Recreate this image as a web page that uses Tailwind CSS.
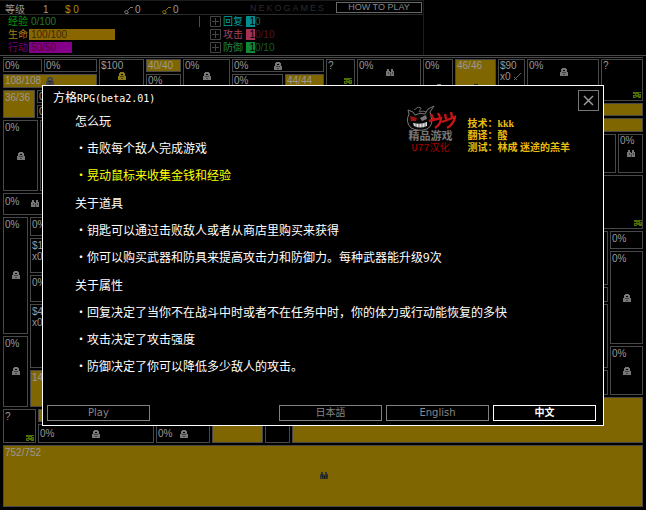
<!DOCTYPE html>
<html lang="zh-CN">
<head>
<meta charset="utf-8">
<meta name="viewport" content="width=device-width, initial-scale=1">
<title>方格RPG</title>
<script src="https://cdn.jsdelivr.net/npm/@tailwindcss/browser@4"></script>
</head>
<body class="relative bg-black pb-[3px] text-[10px] leading-3 text-[#999] font-['Liberation_Sans','Noto_Sans_CJK_SC',sans-serif]">

<svg class="hidden" aria-hidden="true">
  <symbol id="lock" viewBox="0 0 8 8"><g shape-rendering="crispEdges"><path d="M2 0h4v1h1v3h1v4H0V4h1V1h1zM3 2v1h2V2z" fill="currentColor" fill-rule="evenodd"/><path d="M2 4h4v1H2zM3 6h2v1H3z" fill="#000" fill-opacity=".45"/></g></symbol>
  <symbol id="pair" viewBox="0 0 8 8"><g shape-rendering="crispEdges"><path d="M1 1h2v2h1v1h1V1h2v2h1v5H0V3h1z" fill="currentColor"/><path d="M2 4h1v2H2zM4 5h1v3H4zM6 4h1v2H6z" fill="#000" fill-opacity=".45"/></g></symbol>
  <symbol id="stairs" viewBox="0 0 8 6"><g shape-rendering="crispEdges"><path d="M0 0h8v1H6v1h2v4H5V5H3v1H0V3h2V2H0z" fill="currentColor"/><path d="M3 2h2v1H3zM1 4h2v1H1zM6 3h1v1H6z" fill="#000" fill-opacity=".55"/></g></symbol>
  <symbol id="plus" viewBox="0 0 11 11"><path d="M.5.5h10v10H.5zM2 5.500h7M5.500 2v7" stroke="currentColor" fill="none"/></symbol>
  <symbol id="key" viewBox="0 0 10 8"><path d="M.5 5.500l1.500-1 2 1v2H1.500zM3.500 4.500L7 1M6 1.500h3" stroke="currentColor" fill="none"/></symbol>
</svg>

<header class="h-[55px] w-[424px] border-t border-r border-[#1c1c1c]">
  <div class="flex h-[14px] items-center border-b border-[#2a2a2a]">
    <div class="flex flex-1 items-center pt-1 pl-[5px]">
      <span class="w-[38px]">等级</span>
      <span class="w-[22px]">1</span>
      <span class="w-[59px] text-[#a59300]">$ 0</span>
      <span class="flex w-[38px] items-center gap-[1px]"><svg class="h-2 w-[10px] text-[#777]"><use href="#key"/></svg>0</span>
      <span class="flex items-center gap-[1px]"><svg class="h-2 w-[10px] text-[#857500]"><use href="#key"/></svg>0</span>
    </div>
    <span class="w-[86px] tracking-[2px] text-[#2c2c2c] text-[9px]">NEKOGAMES</span>
    <button class="mr-[1px] h-[11px] w-[86px] border border-[#666] text-[9px] leading-[9px] text-[#888]">HOW TO PLAY</button>
  </div>
  <div class="flex gap-[10px] pt-[1px] pl-2">
    <div class="grid w-[192px] grid-cols-[21px_1fr] gap-y-[2px] leading-[11px]">
      <span class="text-[#00940c]">经验</span>
      <div class="border-r border-[#008010] pl-[2px] text-[#28752c]">0/100</div>
      <span class="text-[#a47c18]">生命</span>
      <div><div class="w-[86px] bg-[#8a6600] pl-[2px] text-[#3b2b08]">100/100</div></div>
      <span class="text-[#790079]">行动</span>
      <div><div class="w-[43px] bg-[#85008a] pl-[2px] text-[#510028]">50/50</div></div>
    </div>
    <div class="grid grid-cols-[13px_23px_9px_1fr] content-start gap-y-[2px] leading-[11px]">
      <svg class="size-[11px] text-[#444]"><use href="#plus"/></svg><span class="text-[#00a0a0]">回复</span><span class="w-[9px] bg-[#008d8d] text-right text-black">1</span><span class="text-[#176565]">0</span>
      <svg class="size-[11px] text-[#444]"><use href="#plus"/></svg><span class="text-[#a84460]">攻击</span><span class="w-[9px] bg-[#a33355] text-right text-black">1</span><span class="text-[#551522]">0/10</span>
      <svg class="size-[11px] text-[#444]"><use href="#plus"/></svg><span class="text-[#238746]">防御</span><span class="w-[9px] bg-[#108835] text-right text-black">1</span><span class="text-[#1c5c24]">0/10</span>
    </div>
  </div>
</header>

<main class="border-t border-[#4a4a4a] px-[3px]">
  <div class="my-[1px] border-t border-[#4a4a4a]"></div>
  <div class="grid grid-cols-[287fr_307fr_42fr] gap-[2px]">

    <div class="col-span-2 grid h-[29px] grid-cols-[94fr_45fr_35fr_47fr_92fr_29fr_64fr_30fr_41fr_27fr_72fr] gap-[2px] *:min-w-0">
      <div class="flex flex-col gap-[2px]">
        <div class="grid grid-cols-[39fr_53fr] gap-[2px]">
          <div class="h-[13px] border border-[#484848] pl-[1px]">0%</div>
          <div class="h-[13px] border border-[#484848] pl-[1px]">0%</div>
        </div>
        <div class="flex h-[14px] items-center gap-[5px] border border-[#484848] bg-[#806600] pl-[1px]">108/108 <svg class="size-2 text-[#444]"><use href="#lock"/></svg></div>
      </div>
      <div class="border border-b-0 border-[#484848] pl-[1px]">$100<svg class="mx-auto size-2 text-[#8a7a18]"><use href="#lock"/></svg></div>
      <div class="flex flex-col gap-[2px]">
        <div class="h-[13px] border border-[#484848] bg-[#806600] pl-[1px]">40/40</div>
        <div class="h-[14px] border border-b-0 border-[#484848] pl-[1px]">0%</div>
      </div>
      <div class="border border-b-0 border-[#484848] pl-[1px]">0%<svg class="mx-auto size-2 text-[#777]"><use href="#lock"/></svg></div>
      <div class="flex flex-col gap-[2px]">
        <div class="grid h-[13px] grid-cols-3 items-center border border-[#484848] pl-[1px]">0%<svg class="mx-auto size-2 text-[#777]"><use href="#lock"/></svg></div>
        <div class="grid grid-cols-[51fr_39fr] gap-[2px]">
          <div class="h-[14px] border border-b-0 border-[#484848] pl-[1px]">0%</div>
          <div class="h-[14px] border border-b-0 border-[#484848] bg-[#806600] pl-[1px]">44/44</div>
        </div>
      </div>
      <div class="border border-b-0 border-[#484848] pr-[2px] pl-[1px]">?<svg class="mt-[6px] ml-auto h-[6px] w-2 text-[#4b7000]"><use href="#stairs"/></svg></div>
      <div class="border border-b-0 border-[#484848] pl-[1px]">0%<svg class="mx-auto -mt-1 size-2 text-[#777]"><use href="#pair"/></svg></div>
      <div class="overflow-hidden border border-b-0 border-[#484848] pl-[1px]">0%<svg class="mx-auto mt-3 size-2 text-[#777]"><use href="#lock"/></svg></div>
      <div class="overflow-hidden border border-b-0 border-[#484848] bg-[#806600] pl-[1px]">46/46<svg class="mx-auto mt-3 size-2 text-[#222]"><use href="#lock"/></svg></div>
      <div class="border border-b-0 border-[#484848] pl-[1px] leading-[11px]">$90<div class="flex items-center gap-[2px]">x0<svg class="size-[9px]" viewBox="0 0 9 9"><path d="M1 8l7-7M1 5l3 3" stroke="#666" fill="none"/></svg></div></div>
      <div class="border border-b-0 border-[#484848] pl-[1px]">0%<svg class="mx-auto -mt-1 size-2 text-[#777]"><use href="#lock"/></svg></div>
    </div>

    <div class="row-span-2 flex flex-col gap-[2px]">
      <div class="flex h-[42px] flex-col justify-between border border-[#484848] pr-[1px] pb-[2px] pl-[1px]">?<svg class="ml-auto h-[6px] w-2 text-[#4b7000]"><use href="#stairs"/></svg></div>
      <div class="h-[13px] border border-[#484848] bg-[#806600]"></div>
      <div class="h-[14px] border border-[#484848] bg-[#806600]"></div>
      <div class="grid h-[39px] grid-cols-[15fr_25fr] gap-[2px]">
        <div class="border border-[#484848]"></div>
        <div class="border border-[#484848] pl-[1px]">0%<svg class="mx-auto mt-[2px] size-2 text-[#777]"><use href="#pair"/></svg></div>
      </div>
      <div class="flex h-[54px] items-end justify-end border border-[#484848] pb-[2px]"><svg class="h-[6px] w-2 text-[#4b7000]"><use href="#stairs"/></svg></div>
      <div class="grid h-[164px] grid-cols-[7fr_33fr] gap-[2px]">
        <div class="flex flex-col gap-[2px]">
          <div class="h-[54px] border border-[#484848]"></div>
          <div class="h-[15px] border border-[#484848]"></div>
          <div class="h-[64px] border border-[#484848]"></div>
          <div class="h-[25px] border border-[#484848]"></div>
        </div>
        <div class="flex flex-col gap-[2px]">
          <div class="h-[18px] border border-[#484848] pt-[1px] pl-[1px]">0%</div>
          <div class="h-[93px] border border-[#484848] pt-[1px] pl-[1px]">0%<svg class="mx-auto mt-[29px] size-2 text-[#777]"><use href="#lock"/></svg></div>
          <div class="h-[49px] border border-[#484848] pt-[1px] pl-[1px]">0%<svg class="mx-auto mt-[7px] size-2 text-[#777]"><use href="#lock"/></svg></div>
        </div>
      </div>
    </div>

    <div class="row-span-2 flex flex-col gap-[2px]">
      <div class="flex h-[28px] gap-[2px]">
        <div class="w-[32px] border border-[#484848] bg-[#806600] pt-[1px] pl-[1px]">36/36</div>
        <div class="flex flex-1 flex-col gap-[2px]">
          <div class="h-[13px] border border-[#484848] pl-[1px]">0%</div>
          <div class="h-[13px] border border-[#484848] pl-[1px]">0%</div>
        </div>
      </div>
      <div class="flex h-[71px] gap-[2px]">
        <div class="w-[35px] border border-[#484848] pt-[1px] pl-[1px]">0%<svg class="mx-auto mt-[18px] size-2 text-[#777]"><use href="#lock"/></svg></div>
        <div class="flex-1 border border-[#484848]"></div>
      </div>
      <div class="flex h-[22px] border border-[#484848] pt-[2px] pl-[1px]"><span class="w-[26px]">0%</span><svg class="mt-[3px] size-2 text-[#777]"><use href="#pair"/></svg></div>
      <div class="flex h-[190px] gap-[2px]">
        <div class="flex w-[25px] flex-col gap-[2px]">
          <div class="h-[117px] border border-[#484848] pt-[1px] pl-[1px]">0%<svg class="mx-auto mt-[40px] size-2 text-[#777]"><use href="#lock"/></svg></div>
          <div class="h-[71px] border border-[#484848] pt-[1px] pl-[1px]">0%<svg class="mx-auto mt-[17px] size-2 text-[#777]"><use href="#lock"/></svg></div>
        </div>
        <div class="flex flex-1 flex-col gap-[2px]">
          <div class="h-[19px] border border-[#484848] pt-[1px] pl-[1px]">0%</div>
          <div class="h-[35px] border border-[#484848] pt-[1px] pl-[1px] leading-[11px]">$1<br>x0</div>
          <div class="h-[27px] border border-[#484848] pt-[1px] pl-[1px]">0%</div>
          <div class="h-[64px] border border-[#484848] pt-[1px] pl-[1px] leading-[11px]">$4<br>x0</div>
          <div class="h-[37px] border border-[#484848] bg-[#806600] pt-[1px] pl-[1px]">144/144</div>
        </div>
      </div>
      <div class="flex h-[34px] gap-[2px]">
        <div class="flex w-[33px] flex-col justify-between border border-[#484848] p-[1px]">?<svg class="ml-auto h-[6px] w-2 text-[#4b7000]"><use href="#stairs"/></svg></div>
        <div class="flex flex-1 flex-col gap-[2px]">
          <div class="h-[13px] border border-[#484848] bg-[#806600]"></div>
          <div class="grid h-[19px] grid-cols-[115fr_54fr_50fr_25fr] gap-[2px]">
            <div class="grid grid-cols-3 items-center border border-[#484848] pl-[1px]">0%<svg class="mx-auto size-2 text-[#777]"><use href="#lock"/></svg></div>
            <div class="grid grid-cols-3 items-center border border-[#484848] pl-[1px]">0%<svg class="mx-auto size-2 text-[#777]"><use href="#lock"/></svg></div>
            <div class="border border-[#484848] bg-[#806600]"></div>
            <div class="border border-[#484848]"></div>
          </div>
        </div>
      </div>
    </div>

    <div class="h-[305px]"></div>
    <div class="col-span-2 h-[46px] border border-[#484848] bg-[#806600]"></div>
    <div class="col-span-3 h-[62px] border border-[#484848] bg-[#806600] pt-[1px] pl-[1px]">752/752<svg class="mx-auto mt-[12px] size-2 text-[#333]"><use href="#pair"/></svg></div>
  </div>
</main>

<section role="dialog" aria-labelledby="title" class="absolute inset-x-[42px] top-[85px] border border-white bg-black px-1 pb-1 font-['DejaVu_Sans_Mono','Noto_Sans_CJK_SC',sans-serif] text-white">
  <div class="flex h-[21px] items-start pt-1">
    <h1 id="title" class="flex-1 pl-[6px] leading-[14px]"><span class="font-['Noto_Sans_CJK_SC',sans-serif] text-xs leading-[14px]">方格</span>RPG(beta2.01)</h1>
    <button aria-label="关闭" class="size-[21px] shrink-0 border border-[#777]"><svg class="m-auto size-[11px]" viewBox="0 0 11 11"><path d="M1 1l9 9M10 1l-9 9" stroke="#999" stroke-width="1.500"/></svg></button>
  </div>
  <div class="flex flex-col gap-[1px] pl-[28px] font-['Noto_Sans_CJK_SC',sans-serif] text-xs leading-[27px]">
    <div>
      <h2>怎么玩</h2>
      <ul>
        <li>・击败每个敌人完成游戏</li>
        <li class="text-[#ffff00]">・晃动鼠标来收集金钱和经验</li>
      </ul>
    </div>
    <div>
      <h2>关于道具</h2>
      <ul>
        <li>・钥匙可以通过击败敌人或者从商店里购买来获得</li>
        <li>・你可以购买武器和防具来提高攻击力和防御力。每种武器能升级9次</li>
      </ul>
    </div>
    <div>
      <h2>关于属性</h2>
      <ul>
        <li>・回复决定了当你不在战斗中时或者不在任务中时，你的体力或行动能恢复的多快</li>
        <li>・攻击决定了攻击强度</li>
        <li>・防御决定了你可以降低多少敌人的攻击。</li>
      </ul>
    </div>
  </div>
  <div class="mt-[26px] flex gap-1 pr-[3px] font-['DejaVu_Sans','Noto_Sans_CJK_JP',sans-serif] leading-[14px] text-[#888]">
    <button class="mr-auto h-4 w-[103px] border border-[#808080]">Play</button>
    <button class="h-4 w-[103px] border border-[#808080]">日本語</button>
    <button class="h-4 w-[103px] border border-[#808080]">English</button>
    <button class="h-4 w-[103px] border border-white font-bold text-white">中文</button>
  </div>

  <div class="absolute top-[19px] right-[33px] flex gap-3">
    <div class="w-[50px]">
      <svg class="h-[26px] w-[50px]" viewBox="0 0 50 26" aria-hidden="true">
        <path d="M3 9L2 5l5 2 2 3q5-3 10-1l3-5 6-3-4 6 1 4q3 9-4 13-8 3-16-1-6-6-2-14z" fill="#060606" stroke="#777"/>
        <path d="M8 5l4-3 3 1-2 4M14 7q3-2 6 0" stroke="#666" fill="none"/>
        <path d="M4 11l7 2-1 3H5z" fill="#a01010"/><path d="M14 13l6-3 1 4-5 2z" fill="#777"/>
        <path d="M7 18q8 2 14-1v4q-7 3-13 0z" fill="#ddd"/><path d="M10 18v4M13 18v5M16 18v5M19 18v4" stroke="#333" stroke-width=".6"/>
        <path d="M25 9l3 6M23 16l12-3q0 6-6 10M32 8l2 4M39 9l1 5M36 17l13-5q-1 7-8 11M45 7l1 5" stroke="#c41414" stroke-width="2.400" fill="none"/>
      </svg>
      <div class="text-center text-[11px] leading-3 font-bold whitespace-nowrap text-[#777]">精品游戏</div>
      <div class="text-center font-['Liberation_Mono','Noto_Sans_CJK_SC',monospace] text-[#a80000]">U77汉化</div>
    </div>
    <div class="mt-[13px] font-['Liberation_Serif','Noto_Sans_CJK_SC',serif] font-bold whitespace-nowrap text-[#e8bd10]">
      <p>技术：kkk</p>
      <p>翻译：酸</p>
      <p>测试：林成 迷途的羔羊</p>
    </div>
  </div>
</section>
</body>
</html>
